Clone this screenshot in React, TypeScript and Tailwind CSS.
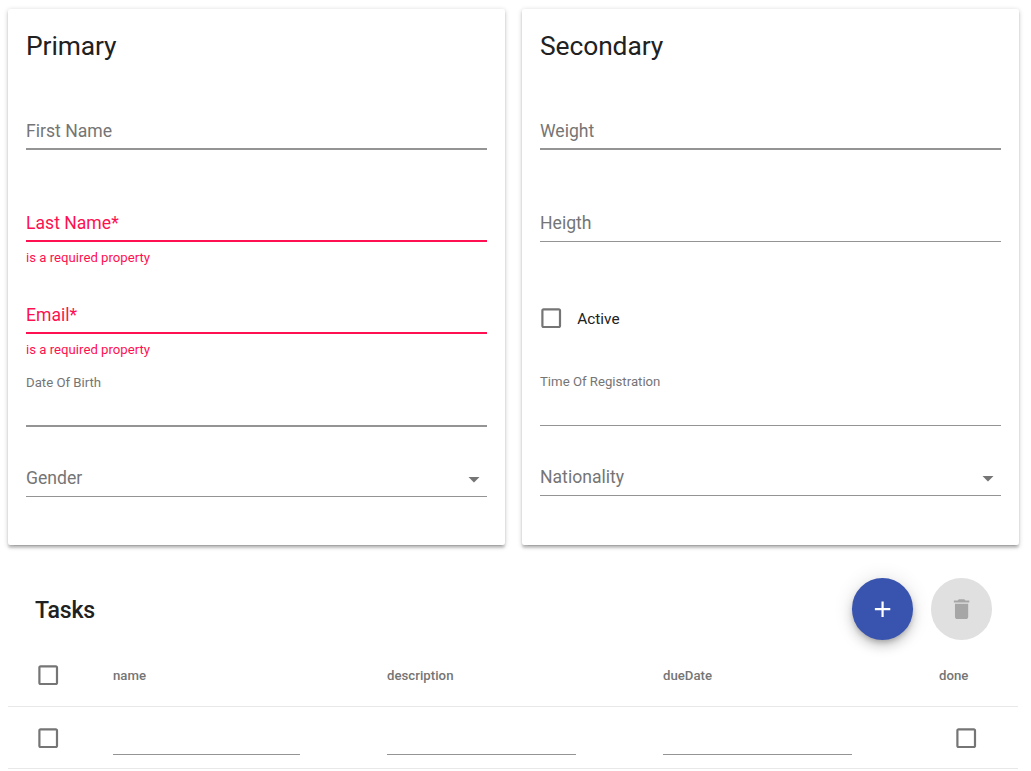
import type { ReactNode } from "react";

function CheckBoxIcon() {
  return (
    <svg viewBox="0 0 24 24" className="block size-[26.4px] shrink-0 fill-[#757575]">
      <path d="M19 5v14H5V5h14m0-2H5c-1.1 0-2 .9-2 2v14c0 1.1.9 2 2 2h14c1.1 0 2-.9 2-2V5c0-1.1-.9-2-2-2z" />
    </svg>
  );
}

function Checkbox({ label }: { label: string }) {
  return (
    <button type="button" role="checkbox" aria-checked="false" aria-label={label} className="block">
      <CheckBoxIcon />
    </button>
  );
}

function ArrowDropDown() {
  return (
    <svg viewBox="0.2 0 24 24" className="block size-[26.4px] shrink-0 fill-[#757575]">
      <path d="M7 10l5 5 5-5z" />
    </svg>
  );
}

function Field({ label, thick = false, error }: { label: string; thick?: boolean; error?: string }) {
  const line = error ? "border-b-2 border-[#ff1050]" : thick ? "border-b-2 border-[#949494]" : "border-b border-[#949494]";
  return (
    <div className="h-[92px]">
      <div className={`flex items-start pt-[23px] ${thick || error ? "h-[53px]" : "h-[52.500px]"} ${line}`}>
        <span className={`text-[17.6px] leading-[22px] ${error ? "text-[#ff1050]" : "text-[#757575]"}`}>
          {label}
        </span>
      </div>
      {error && <p className="pt-[8px] text-[13.2px] leading-4 text-[#ff1050]">{error}</p>}
    </div>
  );
}

function DateField({ label, thick = false }: { label: string; thick?: boolean }) {
  return (
    <div className={`border-[#949494] ${thick ? "h-[54px] border-b-2 pt-[2px]" : "h-[53px] border-b pt-[1px]"}`}>
      <span className="block text-[13.2px] leading-4 text-[#757575]">{label}</span>
    </div>
  );
}

function SelectField({ label }: { label: string }) {
  return (
    <div className="flex h-[70px] items-end justify-between border-b border-[#949494]">
      <span className="mb-[7px] text-[17.6px] leading-[22px] text-[#757575]">{label}</span>
      <span className="mb-[3.800px]">
        <ArrowDropDown />
      </span>
    </div>
  );
}

function Card({ title, children }: { title: string; children: ReactNode }) {
  return (
    <section className="h-[536px] w-[497px] rounded-[2.2px] bg-white px-[18px] pt-[21px] shadow-[0_1.1px_5.5px_rgba(0,0,0,0.2),0_2.2px_2.2px_rgba(0,0,0,0.14),0_3.3px_1.1px_-2.2px_rgba(0,0,0,0.12)]">
      <h2 className="h-[67px] text-[26.4px] leading-8 tracking-[-0.1px] text-[#212121]">{title}</h2>
      {children}
    </section>
  );
}

const columns = "grid grid-cols-[105px_274px_276px_276px_79px]";

export default function App() {
  return (
    <main className="h-[771px] overflow-hidden bg-white px-2 pt-[9px] font-[Roboto,sans-serif]">
      <div className="flex gap-[17px]">
        <Card title="Primary">
          <Field label="First Name" thick />
          <Field label="Last Name*" error="is a required property" />
          <Field label="Email*" error="is a required property" />
          <DateField label="Date Of Birth" thick />
          <SelectField label="Gender" />
        </Card>
        <Card title="Secondary">
          <Field label="Weight" thick />
          <Field label="Heigth" />
          <div className="-ml-[2.500px] flex h-[92px] items-center pb-[17px]">
            <Checkbox label="Active" />
            <span className="ml-[13.300px] text-[15.4px] leading-[22px] text-[#212121]">Active</span>
          </div>
          <DateField label="Time Of Registration" />
          <SelectField label="Nationality" />
        </Card>
      </div>

      <section className="w-[1010px]">
        <header className="flex h-[98px] items-start justify-between pt-[33px] pr-[26px] pl-[27px]">
          <h2 className="pt-[17px] text-[23.1px] font-medium leading-8 tracking-[-0.15px] text-[#212121]">Tasks</h2>
          <div className="flex gap-[18px]">
            <button
              type="button"
              aria-label="Add"
              className="flex h-[62px] w-[61px] items-center justify-center rounded-full bg-[#3954af] shadow-[0_3.3px_5.5px_-1.1px_rgba(0,0,0,0.2),0_6.6px_11px_rgba(0,0,0,0.14),0_1.1px_19.8px_rgba(0,0,0,0.12)]"
            >
              <svg viewBox="-0.35 0 24 24" className="size-[26.4px] fill-white">
                <path d="M19 13h-6v6h-2v-6H5v-2h6V5h2v6h6v2z" />
              </svg>
            </button>
            <button
              type="button"
              aria-label="Delete"
              disabled
              className="flex h-[62px] w-[61px] items-center justify-center rounded-full bg-[#e0e0e0]"
            >
              <svg viewBox="-0.35 0 24 24" className="size-[26.4px] fill-[#a6a6a6]">
                <path d="M6 19c0 1.1.9 2 2 2h8c1.1 0 2-.9 2-2V7H6v12zM19 4h-3.500l-1-1h-5l-1 1H5v2h14V4z" />
              </svg>
            </button>
          </div>
        </header>

        <div className={`${columns} h-16 items-center border-b border-[#e8e8e8] pt-[2px] text-[13.2px] font-medium text-[#757575]`}>
          <div className="pl-[26.800px]">
            <Checkbox label="Select all" />
          </div>
          <span>name</span>
          <span className="tracking-[0.03px]">description</span>
          <span>dueDate</span>
          <span>done</span>
        </div>
        <div className={`${columns} h-[62px] items-center border-b border-[#e8e8e8]`}>
          <div className="pt-[2px] pl-[26.800px]">
            <Checkbox label="Select row" />
          </div>
          <input aria-label="name" className="mt-[1px] h-[34px] w-[187px] border-b border-[#949494] outline-none" />
          <input aria-label="description" className="mt-[1px] h-[34px] w-[189px] border-b border-[#949494] outline-none" />
          <input aria-label="dueDate" className="mt-[1px] h-[34px] w-[189px] border-b border-[#949494] outline-none" />
          <div className="pt-[2px] pl-[13.600px]">
            <Checkbox label="done" />
          </div>
        </div>
      </section>
    </main>
  );
}
